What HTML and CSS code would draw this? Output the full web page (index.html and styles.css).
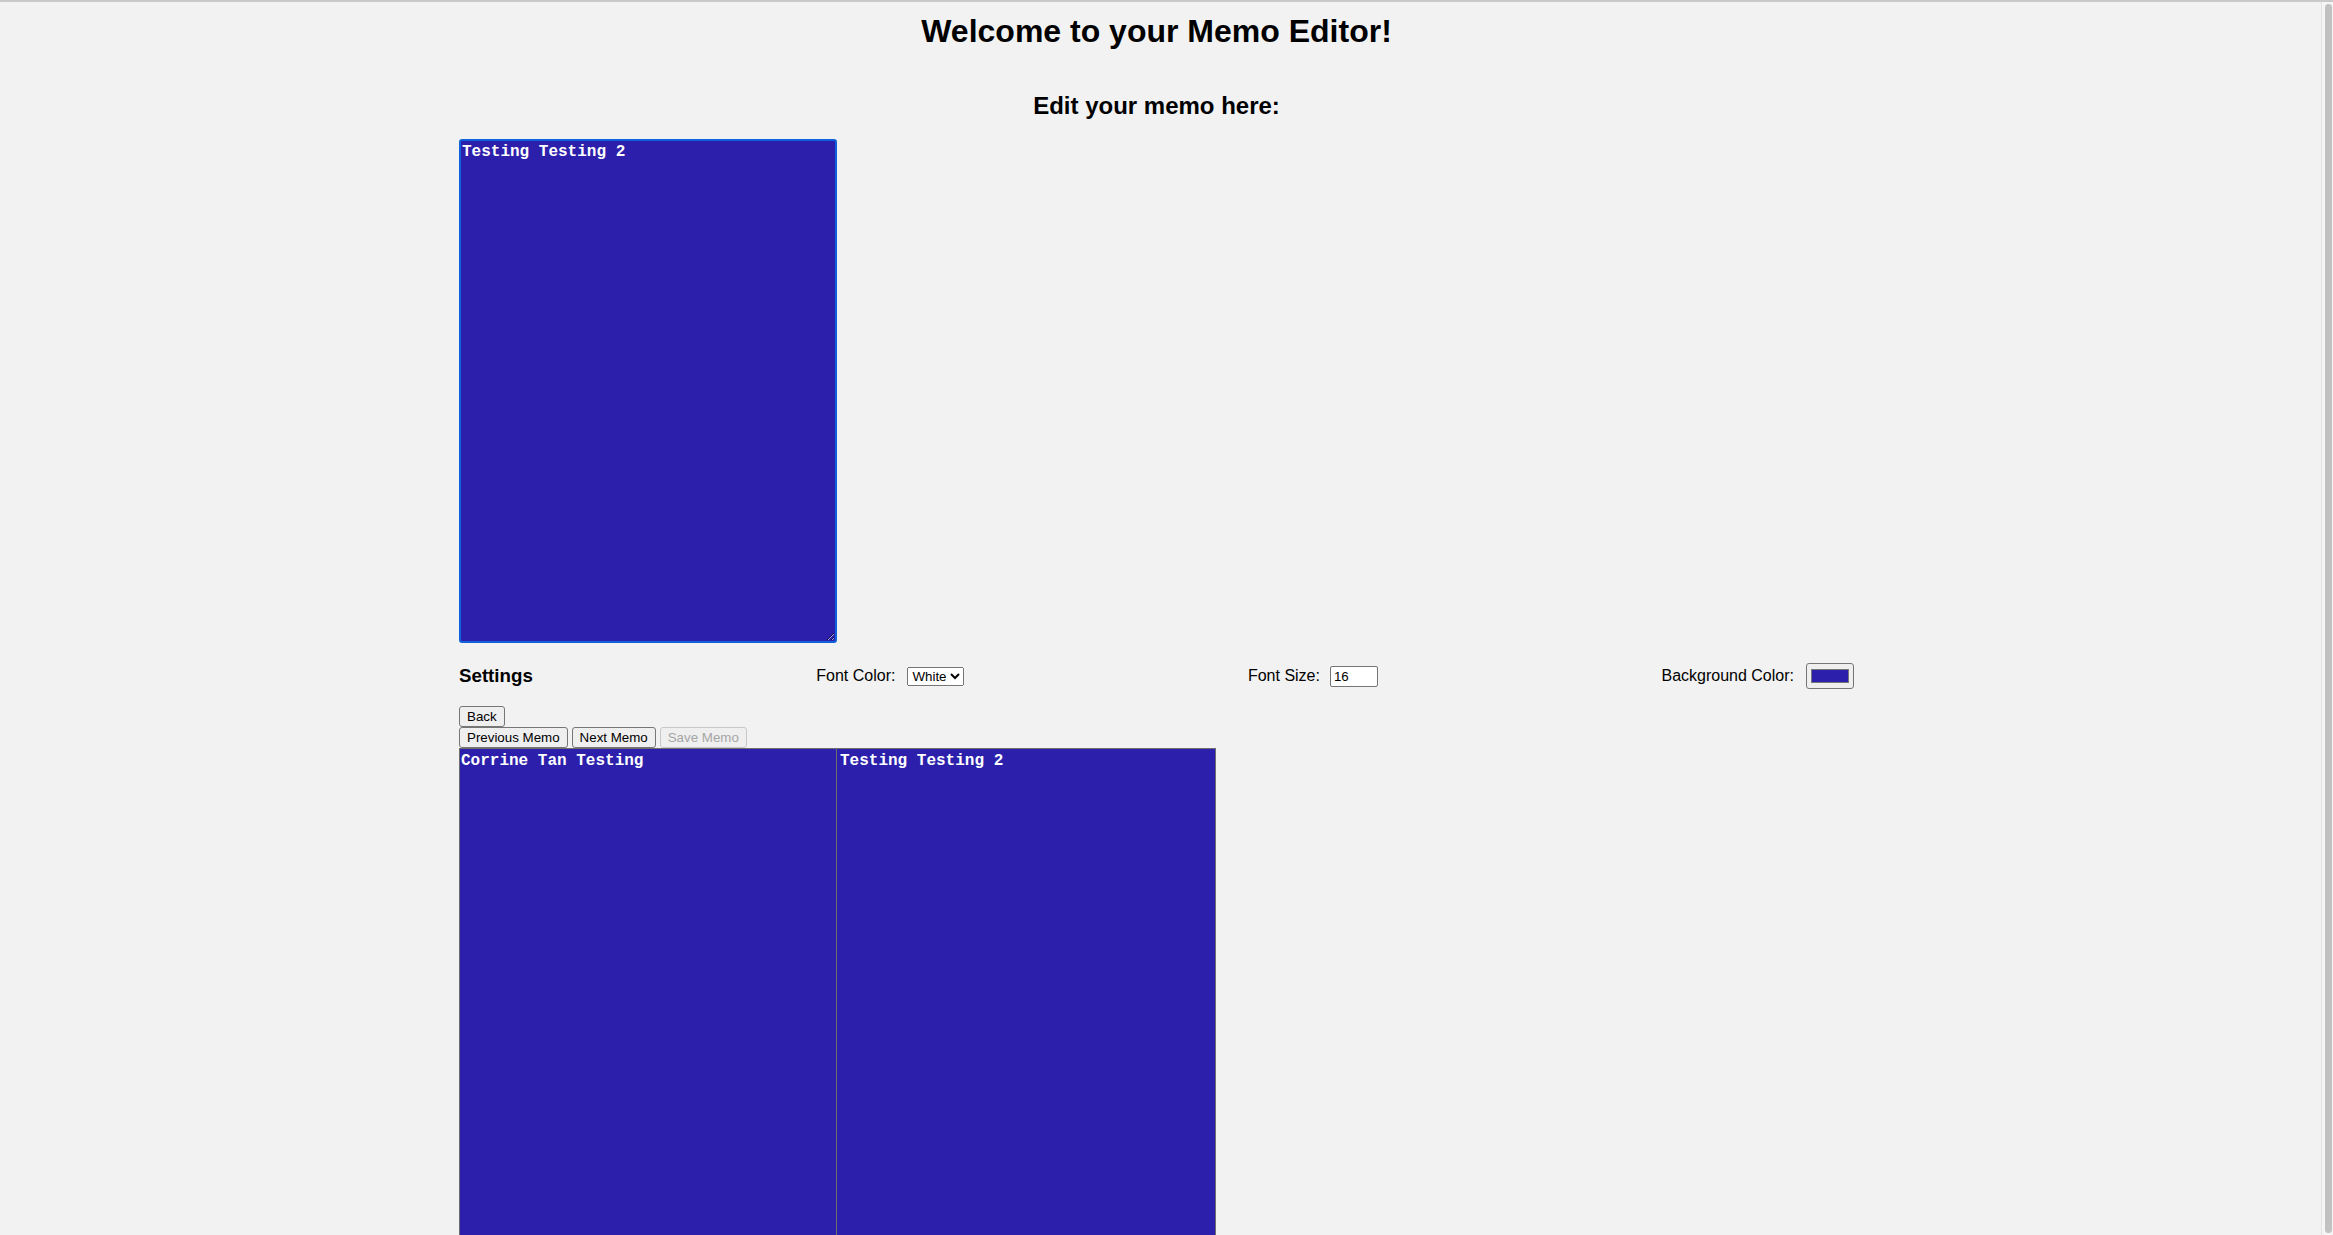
FILE: index.html
```html
<!DOCTYPE html>
<html lang="en">
<head>
<meta charset="utf-8">
<title>Memo Editor</title>
<link rel="stylesheet" href="styles.css">
</head>
<body>
<div class="topline"></div>
<div class="scrollbar"><div class="thumb"></div></div>
<header class="header">
  <h1 class="title">Welcome to your Memo Editor!</h1>
</header>
<main class="editor">
  <h2 class="subtitle">Edit your memo here:</h2>
  <div class="memo-wrap">
    <textarea class="memo">Testing Testing 2</textarea>
  </div>
  <div class="settings">
    <h3 class="settings-title">Settings</h3>
    <div class="field">
      <label class="field-label" for="fc">Font Color:</label>
      <select class="field-select" id="fc"><option>White</option><option>Black</option></select>
    </div>
    <div class="field field-narrow">
      <label class="field-label" for="fs">Font Size:</label>
      <input class="field-input" id="fs" type="text" value="16">
    </div>
    <div class="field">
      <label class="field-label" for="bg">Background Color:</label>
      <input class="field-color" id="bg" type="color" value="#2c1fac">
    </div>
  </div>
  <div class="btn-row">
    <button class="btn" type="button">Back</button>
  </div>
  <div class="btn-row">
    <button class="btn" type="button">Previous Memo</button>
    <button class="btn" type="button">Next Memo</button>
    <button class="btn" type="button" disabled>Save Memo</button>
  </div>
  <div class="previews">
    <div class="preview">Corrine Tan Testing</div>
    <div class="preview preview-next">Testing Testing 2</div>
  </div>
</main>
</body>
</html>
```

FILE: styles.css
```css
html {
  overflow: hidden;
  background: #f2f2f2;
}

body {
  margin: 0 28px 0 8px;
  font-family: "Liberation Sans", Arial, sans-serif;
  color: #000;
  background: #f2f2f2;
}

.topline {
  position: fixed;
  top: 0;
  left: 0;
  right: 0;
  height: 2px;
  background: #c9c9c9;
  z-index: 5;
}

.scrollbar {
  position: fixed;
  top: 2px;
  right: 0;
  bottom: 0;
  width: 11px;
  background: #f5f5f5;
  border-left: 1px solid #e2e2e2;
  z-index: 4;
}

.thumb {
  margin: 2px 1px 2px 3px;
  height: calc(100% - 4px);
  border-radius: 4px;
  background: #c1c1c1;
}

.header {
  text-align: center;
}

.title {
  margin: 13px 0 0;
  font-size: 32px;
  font-weight: bold;
}

.editor {
  width: 1395px;
  margin: 0 auto;
}

.subtitle {
  margin: 42px 0 18.5px;
  font-size: 24px;
  font-weight: bold;
  text-align: center;
}

.memo-wrap {
  margin-bottom: 4px;
}

.memo {
  display: block;
  box-sizing: border-box;
  width: 378px;
  height: 504px;
  margin: 0;
  padding: 2px 1px;
  border: 2px solid #0f62dc;
  border-radius: 3px;
  outline: none;
  background: #2c1fac;
  color: #fff;
  font-family: "Liberation Mono", "Courier New", monospace;
  font-weight: bold;
  font-size: 16px;
}

.settings {
  display: flex;
  justify-content: space-between;
  align-items: center;
}

.settings-title {
  margin: 18.72px 0;
  font-size: 18.72px;
  font-weight: bold;
}

.field {
  display: flex;
  align-items: center;
  gap: 12px;
  font-size: 16px;
}

.field-narrow {
  gap: 10px;
}

.field-select {
  font-family: "Liberation Sans", Arial, sans-serif;
  font-size: 13.33px;
  height: 19px;
  margin: 0;
}

.field-input {
  box-sizing: border-box;
  width: 48px;
  height: 21px;
  margin: 0;
  padding: 1px 3px;
  border: 1px solid #767676;
  border-radius: 2px;
  background: #fff;
  font-family: "Liberation Sans", Arial, sans-serif;
  font-size: 13.33px;
}

.field-color {
  box-sizing: border-box;
  width: 48px;
  height: 26px;
  margin: 0;
  padding: 1px 2px;
  border: 1px solid #767676;
  border-radius: 3px;
  background: #efefef;
}

.btn-row {
  display: flex;
  gap: 4px;
}

.btn {
  box-sizing: border-box;
  height: 21px;
  margin: 0;
  padding: 1px 7px;
  border: 1px solid #767676;
  border-radius: 3px;
  background: #efefef;
  color: #000;
  font-family: "Liberation Sans", Arial, sans-serif;
  font-size: 13.33px;
}

.btn:disabled {
  color: #a6a6a6;
  border-color: #c8c8c8;
  background: #efefef;
}

.previews {
  display: flex;
}

.preview {
  box-sizing: border-box;
  width: 378px;
  height: 504px;
  padding: 3px 1px 1px;
  border: 1px solid #6e6e6e;
  background: #2c1fac;
  color: #fff;
  font-family: "Liberation Mono", "Courier New", monospace;
  font-weight: bold;
  font-size: 16px;
  white-space: pre-wrap;
}

.preview-next {
  width: 379px;
  border-left: none;
  padding-left: 3px;
}
```
